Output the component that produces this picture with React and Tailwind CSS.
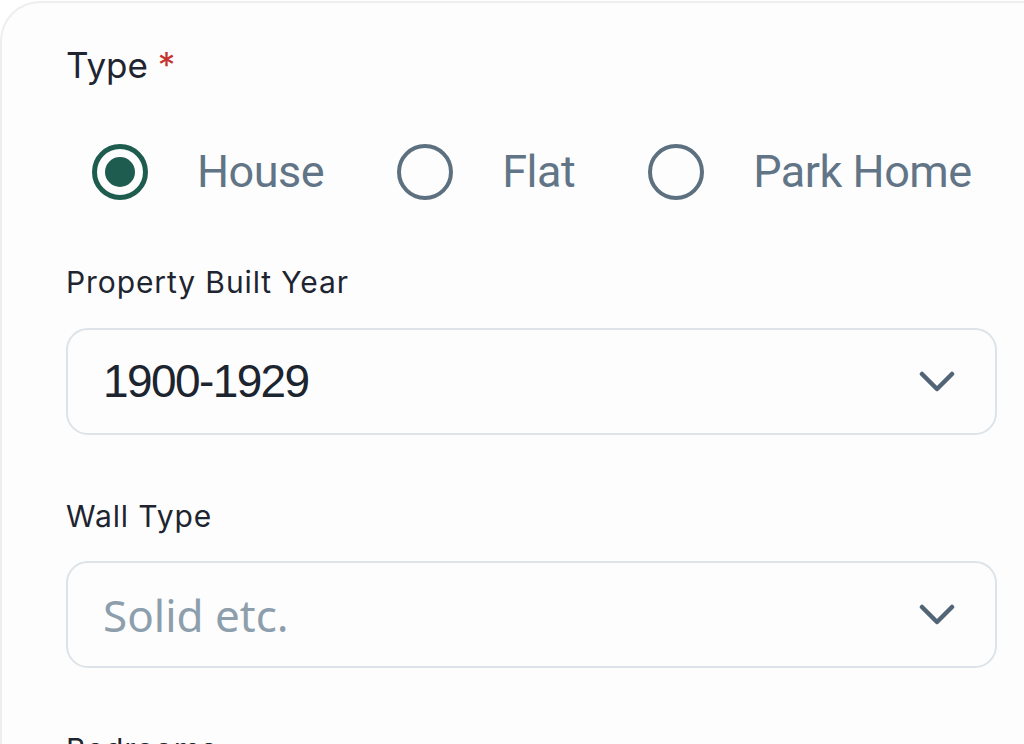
import React, { useState } from "react";

const labelFont = { fontFamily: "Inter, 'Noto Sans', sans-serif" };

function Radio({ label, checked, onClick }) {
  return (
    <button type="button" onClick={onClick} className="flex items-center gap-[49px]">
      <span
        className={
          checked
            ? "flex h-[56px] w-[56px] items-center justify-center rounded-full border-[5px] border-[#1f5c50]"
            : "flex h-[56px] w-[56px] items-center justify-center rounded-full border-[4px] border-[#5d7080]"
        }
      >
        {checked && <span className="h-[30px] w-[30px] rounded-full bg-[#1f5c50]" />}
      </span>
      <span className="font-['Roboto',sans-serif] text-[45px] leading-[60px] tracking-[-0.5px] text-[#627587]">
        {label}
      </span>
    </button>
  );
}

function Chevron() {
  return (
    <svg width="36" height="22" viewBox="0 0 36 22" fill="none">
      <path d="M3 3L18 18L33 3" stroke="#526576" strokeWidth="4.5" strokeLinecap="round" strokeLinejoin="round" />
    </svg>
  );
}

function SelectBox({ value, placeholder }) {
  return (
    <div className="flex h-[107px] items-center justify-between rounded-[22px] border-2 border-[#dde3e8] bg-[#fdfdfd] pl-[35px] pr-[40px]">
      {value ? (
        <span className="font-['Liberation_Sans',Arial,sans-serif] text-[46px] tracking-[-1.6px] text-[#1c2430]">
          {value}
        </span>
      ) : (
        <span className="font-['Noto_Sans',sans-serif] text-[44px] text-[#8d9eac]">{placeholder}</span>
      )}
      <Chevron />
    </div>
  );
}

export default function App() {
  const [type, setType] = useState("House");

  return (
    <div className="h-[744px] overflow-hidden bg-white">
      <div className="mt-[1px] h-[760px] rounded-tl-[40px] border-l-2 border-t-2 border-[#eceef0] bg-[#fdfdfd] pl-16 pr-[27px] pt-[38px]">
        <div style={labelFont} className="text-[35px] leading-[48px] text-[#1e2530]">
          Type <span className="text-[#c5332f]">*</span>
        </div>

        <div className="ml-[26px] mt-[53px] flex items-center gap-[73px]">
          {["House", "Flat", "Park Home"].map((t) => (
            <Radio key={t} label={t} checked={type === t} onClick={() => setType(t)} />
          ))}
        </div>

        <div style={labelFont} className="mt-[62px] text-[30px] leading-[36px] tracking-[0.9px] text-[#1e2530]">
          Property Built Year
        </div>
        <div className="mt-[28px]">
          <SelectBox value="1900-1929" />
        </div>

        <div style={labelFont} className="mt-[63px] text-[30px] leading-[36px] tracking-[0.9px] text-[#1e2530]">
          Wall Type
        </div>
        <div className="mt-[27px]">
          <SelectBox placeholder="Solid etc." />
        </div>

        <div style={labelFont} className="mt-[63px] text-[30px] leading-[36px] tracking-[0.9px] text-[#1e2530]">
          Bedrooms
        </div>
      </div>
    </div>
  );
}
